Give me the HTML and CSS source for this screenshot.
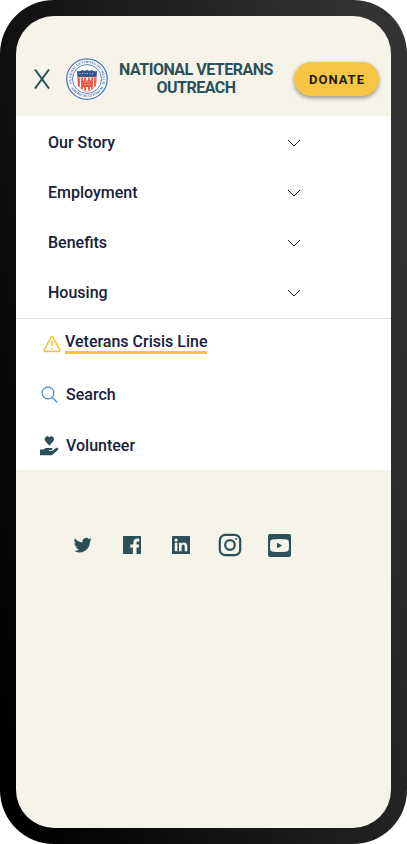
FILE: index.html
```html
<!DOCTYPE html>
<html lang="en">
<head>
<meta charset="utf-8">
<meta name="viewport" content="width=device-width, initial-scale=1">
<title>National Veterans Outreach</title>
<link rel="stylesheet" href="styles.css">
</head>
<body>
<div class="device">
  <div class="screen">
    <header class="header">
      <button class="close" type="button" aria-label="Close menu">
        <svg width="16" height="20" viewBox="0 0 16 20"><path d="M1 .5 15 19.5M15 .5 1 19.5"/></svg>
      </button>
      <svg class="seal" width="42" height="42" viewBox="0 0 84 84" aria-hidden="true">
        <defs>
          <path id="arc-top" d="M18 62A31.500 31.500 0 1 1 66 62"/>
          <path id="arc-bottom" d="M4 40A38 38 0 0 0 80 40"/>
        </defs>
        <circle cx="42" cy="42" r="40.500" fill="#fff" stroke="#4a73b8" stroke-width="2.500"/>
        <circle cx="42" cy="42" r="29" fill="#fff" stroke="#4a73b8" stroke-width="1.800"/>
        <text class="seal-text"><textPath href="#arc-top" startOffset="50%" text-anchor="middle">NATIONAL VETERANS OUTREACH</textPath></text>
        <text class="seal-text"><textPath href="#arc-bottom" startOffset="50%" text-anchor="middle">AMERICAN GI FORUM</textPath></text>
        <path d="M22 26q6 2 10-2 5 3 10 0 5 3 10 0 4 4 10 2l-1 14H23z" fill="#2f5597"/>
        <path d="M23 38h38c1 13-2 23-19 30C25 61 22 51 23 38z" fill="#fff" stroke="#e8503a" stroke-width="1"/>
        <path d="M26 39v18M32 39v23M38 39v26M46 39v26M52 39v23M58 39v18" stroke="#e8503a" stroke-width="3.500"/>
        <path d="M33 45h18v13H33z" fill="#e8503a"/>
        <path d="M35 48h14M35 53h14" stroke="#f6d1cb" stroke-width="1"/>
        <path d="M27 31h30" stroke="#c5d3ea" stroke-width="2" stroke-dasharray="2 3"/>
      </svg>
      <h1 class="title">NATIONAL VETERANS OUTREACH</h1>
      <button class="donate" type="button">DONATE</button>
    </header>
    <nav class="menu" aria-label="Main">
      <div class="topics">
        <button class="topic" type="button">Our Story<svg class="chevron" width="14" height="8" viewBox="0 0 14 8"><path d="m1 1 6 6 6-6"/></svg></button>
        <button class="topic" type="button">Employment<svg class="chevron" width="14" height="8" viewBox="0 0 14 8"><path d="m1 1 6 6 6-6"/></svg></button>
        <button class="topic" type="button">Benefits<svg class="chevron" width="14" height="8" viewBox="0 0 14 8"><path d="m1 1 6 6 6-6"/></svg></button>
        <button class="topic" type="button">Housing<svg class="chevron" width="14" height="8" viewBox="0 0 14 8"><path d="m1 1 6 6 6-6"/></svg></button>
      </div>
      <div class="links">
        <a class="link crisis" href="#crisis">
          <svg class="link-icon" width="24" height="20" viewBox="0 0 24 20"><path d="M11 3.300 4.300 15.800Q3.600 17.500 5.300 17.500H18.700Q20.400 17.500 19.700 15.800L13 3.300Q12 2 11 3.300zM12 6.500v5.500M12 14v1.300" fill="none" stroke="#f9c22e" stroke-width="1.500"/></svg>
          <span class="underlined">Veterans Crisis Line</span>
        </a>
        <a class="link" href="#search">
          <svg class="link-icon" width="24" height="20" viewBox="0 0 24 20"><path d="m12.400 12.600 4.600 4.600" stroke="#3d86c6" stroke-width="1.300"/><circle cx="8" cy="8" r="5.900" fill="none" stroke="#3d86c6" stroke-width="1.200"/></svg>
          <span>Search</span>
        </a>
        <a class="link" href="#volunteer">
          <svg class="link-icon" width="24" height="20" viewBox="0 0 24 20"><path d="M9.300 9.700 5.600 5.600C3.300 3 5.600-.9 8.300.4l1 .9 1-.9c2.700-1.300 5 2.600 2.700 5.200z" fill="#2b5057"/><path d="M0 13.500h3.200c1.200-1 2.300-1.600 3.600-1.600h4.400c1.700 0 1.700 2.200 0 2.200H8.800v.6h3.500l3.800-2.700c1.500-1 3 .7 1.700 1.900l-4.700 4.400c-.7.600-1.400.9-2.300.9H0z" fill="#2b5057"/></svg>
          <span>Volunteer</span>
        </a>
      </div>
    </nav>
    <footer class="social">
      <a class="social-link" href="#twitter" aria-label="Twitter"><svg width="18" height="18" viewBox="0 0 24 24"><path fill="#2b5057" d="M23.600 4.800a10 10 0 0 1-2.800.8 4.900 4.900 0 0 0 2.100-2.700 10 10 0 0 1-3.100 1.200 4.900 4.900 0 0 0-8.400 4.500A14 14 0 0 1 1.300 3.400a4.900 4.900 0 0 0 1.500 6.600 4.900 4.900 0 0 1-2.200-.6 4.900 4.900 0 0 0 3.900 4.900 4.900 4.900 0 0 1-2.200.1 4.900 4.900 0 0 0 4.600 3.400A9.900 9.900 0 0 1 0 19.800 14 14 0 0 0 21.200 7.300a10 10 0 0 0 2.400-2.500z"/></svg></a>
      <a class="social-link" href="#facebook" aria-label="Facebook"><svg width="18" height="18" viewBox="0 0 18 18"><path fill="#2b5057" d="M.5 0h17l.5.500v17l-.5.500h-4V11.500h2.300l.4-2.900h-2.700V6.800c0-.8.400-1.300 1.400-1.300h1.400V2.800c-3.900-.7-5.900.7-5.900 3.700v2.100H7.300v2.900h2.600V18H.5l-.5-.5V.5z"/></svg></a>
      <a class="social-link" href="#linkedin" aria-label="LinkedIn"><svg width="18" height="18" viewBox="0 0 18 18"><rect width="18" height="18" rx=".5" fill="#2b5057"/><circle cx="4.100" cy="4.100" r="1.600" fill="#f6f3ea"/><path fill="#f6f3ea" d="M2.800 6.800h2.600v8.500H2.800zM7 6.800h2.500V8c1.400-2.300 5.800-1.800 5.800 2v5.300h-2.600v-4.700c0-2.400-3.100-2.200-3.100 0v4.700H7z"/></svg></a>
      <a class="social-link" href="#instagram" aria-label="Instagram"><svg width="24" height="24" viewBox="0 0 24 24"><rect x="1.800" y="1.800" width="20.400" height="20.400" rx="5.500" fill="none" stroke="#2b5057" stroke-width="2.200"/><circle cx="12" cy="12" r="4.800" fill="none" stroke="#2b5057" stroke-width="2.200"/><circle cx="18" cy="6" r="1" fill="#2b5057"/></svg></a>
      <a class="social-link" href="#youtube" aria-label="YouTube"><svg width="24" height="24" viewBox="0 0 24 24"><rect x="1" y="1" width="23" height="23" rx="2" fill="#2b5057"/><path fill="#f6f3ea" d="M5 6.500q7.500-1 15 0 1.700.3 1.800 2 .4 4 0 8-.1 1.700-1.800 2-7.500 1-15 0-1.700-.3-1.800-2-.4-4 0-8 .1-1.700 1.800-2z"/><path fill="#2b5057" d="m10 9.700 5.300 2.800-5.300 2.800z"/></svg></a>
    </footer>
  </div>
</div>
</body>
</html>
```
FILE: styles.css
```css
* {
  box-sizing: border-box;
}

body {
  margin: 0;
  background: #fff;
  color: #17203a;
  font-family: Roboto, "Liberation Sans", sans-serif;
}

button {
  margin: 0;
  padding: 0;
  border: 0;
  background: none;
  color: inherit;
  font: inherit;
  cursor: pointer;
}

a {
  color: inherit;
  text-decoration: none;
}

svg {
  display: block;
  flex: none;
}

.device {
  display: flex;
  min-height: 100vh;
  padding: 16px;
  border-radius: 54px;
  background: linear-gradient(76deg, #000 5%, #333 92%);
}

.screen {
  flex: 1;
  min-width: 0;
  overflow: hidden;
  border-radius: 38px;
  background: #f6f3ea;
}

.header {
  display: flex;
  align-items: center;
  min-height: 100px;
  padding: 26px 12px 0 18px;
}

.close {
  margin-right: 16px;
}

.close path {
  fill: none;
  stroke: #2b5057;
  stroke-width: 2;
}

.seal-text {
  fill: #2f5ba5;
  font-size: 7px;
  font-weight: 700;
  font-family: "Liberation Serif", serif;
}

.title {
  flex: 1;
  margin: 0 18px 0 8px;
  color: #2b5057;
  font-size: 16px;
  font-weight: 700;
  line-height: 18px;
  letter-spacing: -0.5px;
  text-align: center;
}

.donate {
  min-height: 34px;
  padding: 0 14px 0 15px;
  border-radius: 17px;
  background: #f7c544;
  box-shadow: 0 2px 4px rgba(0, 0, 0, 0.4);
  color: #201d10;
  font-size: 13px;
  font-weight: 700;
  letter-spacing: 1px;
}

.menu {
  background: #fff;
  font-size: 16px;
  font-weight: 500;
  line-height: 20px;
}

.topics,
.links {
  display: flex;
  flex-direction: column;
}

.topics {
  justify-content: space-around;
  min-height: 203px;
  padding: 2px 90px 0 32px;
  border-bottom: 1px solid #dcdfe6;
}

.topic {
  display: flex;
  align-items: center;
  justify-content: space-between;
}

.chevron path {
  fill: none;
  stroke: #17203a;
  stroke-width: 1;
}

.links {
  gap: 31px;
  padding: 14px 24px;
}

.link {
  display: flex;
  align-items: center;
  gap: 2px;
}

.crisis {
  gap: 1px;
}

.underlined {
  line-height: 18px;
  border-bottom: 3px solid #f7c544;
}

.social {
  display: grid;
  grid-template-columns: repeat(5, 49px);
  align-items: center;
  padding: 63px 42px;
}

.social-link {
  display: flex;
  justify-content: center;
}
```
